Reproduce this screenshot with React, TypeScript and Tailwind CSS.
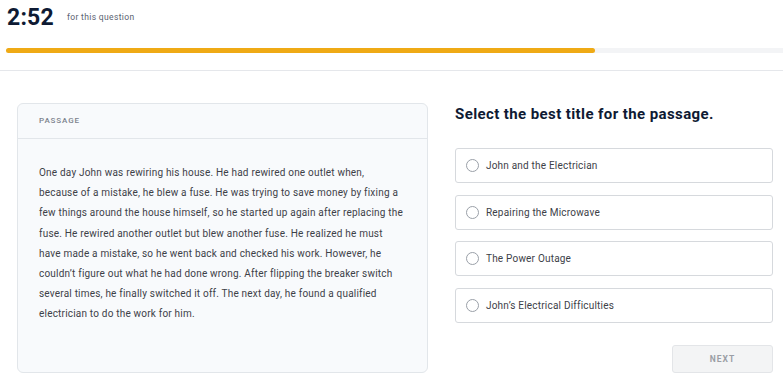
import React from "react";

const options = [
  "John and the Electrician",
  "Repairing the Microwave",
  "The Power Outage",
  "John\u2019s Electrical Difficulties",
];

const lines = [
  "One day John was rewiring his house. He had rewired one outlet when,",
  "because of a mistake, he blew a fuse. He was trying to save money by fixing a",
  "few things around the house himself, so he started up again after replacing the",
  "fuse. He rewired another outlet but blew another fuse. He realized he must",
  "have made a mistake, so he went back and checked his work. However, he",
  "couldn\u2019t figure out what he had done wrong. After flipping the breaker switch",
  "several times, he finally switched it off. The next day, he found a qualified",
  "electrician to do the work for him.",
];

export default function App() {
  return (
    <div className="w-[783px] h-[385px] bg-white overflow-hidden" style={{ fontFamily: "Roboto, 'Liberation Sans', sans-serif" }}>
      <div className="h-[71px] border-b border-[#e5e7eb]">
        <div className="flex items-center h-[34px] pl-[7px] gap-[13px]">
          <span className="text-[23px] font-bold leading-none text-[#0e1a33] tracking-[0.2px]">2:52</span>
          <span className="text-[8.5px] text-[#5b6270] tracking-[0.35px]">for this question</span>
        </div>
        <div className="mt-[14px] ml-[6px] h-[5px] bg-[#f3f4f6] rounded-l-full flex">
          <div className="w-[589px] h-full bg-[#efaa15] rounded-full" />
        </div>
      </div>
      <div className="flex pl-[17px] pr-[10px] pt-[32px] gap-[27px]">
        <div className="w-[411px] h-[270px] bg-[#f8fafc] border border-[#e2e6ea] rounded-[6px] flex flex-col">
          <div className="h-[35px] border-b border-[#e2e6ea] px-[21px] flex items-center">
            <span className="text-[8px] font-medium tracking-[0.9px] text-[#7c828c]">PASSAGE</span>
          </div>
          <p className="pl-[21px] pr-[10px] pt-[24px] text-[10px] leading-[20.2px] tracking-[0.2px] text-[#3d4148]">
            {lines.map((l) => (
              <span key={l} className="block whitespace-nowrap">{l}</span>
            ))}
          </p>
        </div>
        <div className="w-[318px] flex flex-col">
          <h1 className="mt-[1px] h-[20px] text-[15px] font-bold leading-[20px] tracking-[0.4px] text-[#0e1a33]">
            Select the best title for the passage.
          </h1>
          <div className="mt-[24px] flex flex-col gap-[11.67px]">
            {options.map((o) => (
              <div key={o} className="h-[35px] border border-[#d6d9dd] rounded-[3px] flex items-center pl-[10px] gap-[7px] bg-white">
                <span className="w-[13px] h-[13px] rounded-full border border-[#9aa0a8]" />
                <span className="text-[10px] tracking-[0.2px] text-[#3d4148]">{o}</span>
              </div>
            ))}
          </div>
          <div className="flex justify-end mt-[22px]">
            <button className="w-[101px] h-[28px] bg-[#f3f4f5] border border-[#e3e5e8] rounded-[3px] text-[8.5px] font-bold tracking-[1px] text-[#9a9ea5]">
              NEXT
            </button>
          </div>
        </div>
      </div>
    </div>
  );
}
